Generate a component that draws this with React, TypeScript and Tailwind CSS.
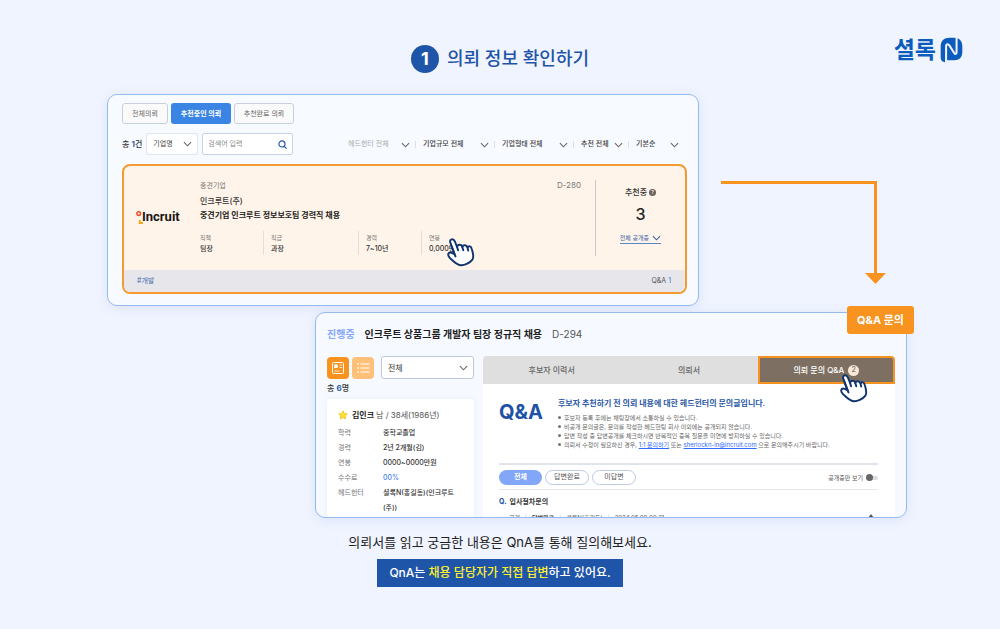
import type { ReactNode } from "react";

type SelectProps = {
  label: string;
  text: string;
  className?: string;
  selectClassName?: string;
};

const FILTERS = [
  { label: "헤드헌터", text: "헤드헌터 전체", width: "w-[62px]", muted: true },
  { label: "기업규모", text: "기업규모 전체", width: "w-[66px]", muted: false },
  { label: "기업형태", text: "기업형태 전체", width: "w-[66px]", muted: false },
  { label: "추천", text: "추천 전체", width: "w-[42px]", muted: false },
  { label: "정렬", text: "기본순", width: "w-[43px]", muted: false },
];

const SPECS = [
  { name: "직책", value: "팀장", width: "w-[63px]" },
  { name: "직급", value: "과장", width: "w-[95px]" },
  { name: "경력", value: "7~10년", width: "w-[63px]" },
  { name: "연봉", value: "0,000만원", width: "w-[60px]" },
];

const PROFILE = [
  { name: "학력", value: "중학교졸업" },
  { name: "경력", value: "2년 2개월(김)" },
  { name: "연봉", value: "0000~0000만원" },
  { name: "수수료", value: "00%", accent: true },
  { name: "헤드헌터", value: "셜록N(홍길동)(인크루트(주))" },
];

function Chevron({ className = "" }: { className?: string }) {
  return (
    <svg
      viewBox="0 0 10 6"
      className={`h-[6px] w-[9px] ${className}`}
      fill="none"
      stroke="currentColor"
      strokeWidth="1.2"
      aria-hidden="true"
    >
      <path d="M1 0.8 5 5 9 0.8" />
    </svg>
  );
}

function HandCursor({ className = "" }: { className?: string }) {
  return (
    <svg
      viewBox="0 0 86 88"
      className={`pointer-events-none absolute z-10 h-[29px] w-[28px] ${className}`}
      stroke="#12356f"
      strokeWidth="6"
      strokeLinecap="round"
      strokeLinejoin="round"
      aria-hidden="true"
    >
      <path
        fill="#fff"
        d="M10 13C7 2 20 0 24 10L31 27C33 18 45 18 47 27C50 19 61 20 63 29C67 22 74 24 76 33C80 46 84 56 78 66C70 77 52 84 42 83C28 82 20 71 8 60C0 50 4 41 14 45L23 49Z"
      />
      <path fill="none" d="M14 25 26 56M31 27 34 37M47 27 50 37M63 29 65 38" />
    </svg>
  );
}

function SelectBox({ label, text, className = "", selectClassName = "" }: SelectProps) {
  return (
    <div className={`relative flex items-center ${className}`}>
      <select
        aria-label={label}
        className={`h-full w-full appearance-none bg-transparent outline-none ${selectClassName}`}
      >
        <option>{text}</option>
      </select>
      <Chevron className="pointer-events-none absolute right-[5px] text-[#666]" />
    </div>
  );
}

function Logo() {
  return (
    <div className="flex items-center gap-1 text-[#0c5cbd]">
      <span className="text-[23px] font-bold leading-6">셜록</span>
      <svg viewBox="0 0 68 76" className="h-[26px] w-[23px]" role="img" aria-label="N">
        <path
          fill="currentColor"
          d="M28 2H42C57 2 66 12 66 27V43C66 60 57 68 42 68H28C22 68 18 67 15 65V74C7 74 2 69 2 61V27C2 12 12 2 28 2Z"
        />
        <path
          d="M18 76V27C18 20 24 19 28 25L42 47C45 51 49 50 49 45V0"
          fill="none"
          stroke="#f0f4ff"
          strokeWidth="6"
        />
      </svg>
    </div>
  );
}

function IncruitLogo() {
  return (
    <div className="flex items-center">
      <svg viewBox="0 0 7 15" className="-mr-px h-[15px] w-[7px]" fill="none" aria-hidden="true">
        <circle cx="2.7" cy="3.6" r="1.8" stroke="#e94e2b" strokeWidth="1.5" />
        <path d="M3.8 10V13H7" stroke="#f5a81c" strokeWidth="2" />
      </svg>
      <span className="text-[13px] font-bold leading-4 text-[#1b1512] [font-family:Roboto,sans-serif]">
        Incruit
      </span>
    </div>
  );
}

function FlowArrow() {
  return (
    <svg
      viewBox="0 0 166 105"
      className="ml-[21px] mt-[86px] h-[105px] w-[166px] shrink-0"
      aria-hidden="true"
    >
      <path d="M1 2.5H155.5V94" fill="none" stroke="#f7931e" strokeWidth="3" />
      <path d="M145 93H166L155.5 104Z" fill="#f7931e" />
    </svg>
  );
}

function RequestCard() {
  return (
    <article className="mt-[9px] overflow-hidden rounded-lg border-2 border-[#f59a30] bg-[#fff4e9]">
      <div className="flex h-[104px]">
        <div className="flex w-[76px] shrink-0 items-center pb-[2px] pl-3">
          <IncruitLogo />
        </div>

        <div className="min-w-0 flex-1 pt-[14px]">
          <div className="flex justify-between pr-[14px] leading-[11px] text-[#777]">
            <span>중견기업</span>
            <span className="text-[8px]">D-280</span>
          </div>
          <p className="mt-1 text-[8px] font-medium leading-3 text-[#333]">인크루트(주)</p>
          <h2 className="mt-[2px] text-[8px] font-bold leading-3 text-[#222]">
            중견기업 인크루트 정보보호팀 경력직 채용
          </h2>
          <dl className="mt-[10px] flex">
            {SPECS.map((spec, index) => (
              <div
                key={spec.name}
                className={`relative ${spec.width} leading-[11px] ${
                  index > 0 ? "border-l border-[#e6ddd5] pl-[7px]" : ""
                }`}
              >
                <dt className="pt-px text-[6px] text-[#777]">{spec.name}</dt>
                <dd className="pb-px font-medium text-[#333]">{spec.value}</dd>
                {index === 3 && <HandCursor className="left-[25px] top-[7px]" />}
              </div>
            ))}
          </dl>
        </div>

        <div className="my-[14px] flex w-[90px] shrink-0 flex-col items-center border-l border-[#c9c9ca] pt-[6px]">
          <p className="flex items-center gap-[2px] text-[8px] font-medium leading-3 text-[#333]">
            추천중
            <span className="flex h-[7px] w-[7px] items-center justify-center rounded-full bg-[#6e635a] text-[5px] leading-none text-white">
              ?
            </span>
          </p>
          <strong className="mt-[6px] text-[16px] font-medium leading-5 text-[#222]">3</strong>
          <button
            type="button"
            className="mt-[9px] flex items-center gap-[3px] border-b border-[#5c86c5] text-[6px] leading-[10px] text-[#3c63a8]"
          >
            전체 공개중
            <Chevron className="h-[4px] w-[6px]" />
          </button>
        </div>
      </div>

      <div className="flex h-[22px] items-center justify-between bg-[#e6e6eb] pl-[13px] pr-[14px] pt-px">
        <span className="text-[#4a6fae]">#개발</span>
        <span className="text-[#555]">
          Q&amp;A <span className="text-[#3c74d6]">1</span>
        </span>
      </div>
    </article>
  );
}

function RequestList() {
  return (
    <section className="w-[74%] shrink-0 rounded-[10px] border border-[#94bbef] bg-[#f7faff] pb-[11px] pl-[14px] pr-[11px] pt-2 text-[7px] shadow-[0_2px_12px_rgba(70,110,200,0.12)]">
      <div className="flex gap-[3px]">
        <button
          type="button"
          className="h-[21px] w-[46px] rounded-[3px] border border-[#c8cfdc] bg-[#fafafa] pt-px text-[#666]"
        >
          전체의뢰
        </button>
        <button
          type="button"
          className="h-[21px] w-[60px] rounded-[3px] bg-[#3a84e4] pt-px font-bold text-white"
        >
          추천중인 의뢰
        </button>
        <button
          type="button"
          className="h-[21px] w-[60px] rounded-[3px] border border-[#c8cfdc] bg-[#fafafa] pt-px text-[#666]"
        >
          추천완료 의뢰
        </button>
      </div>

      <div className="mt-[9px] flex h-[22px] items-center">
        <p className="mr-1 whitespace-nowrap text-[8px] font-medium text-[#333]">
          총 <span className="font-bold text-[#2b5cad]">1</span>건
        </p>
        <SelectBox
          label="검색 조건"
          text="기업명"
          className="h-full w-[52px] rounded-[2px] border border-[#e1e6ef] bg-white"
          selectClassName="pl-[6px] text-[#444]"
        />
        <div className="ml-1 flex h-full w-[91px] items-center rounded-[2px] border border-[#c9d3e6] bg-white px-[5px]">
          <input
            aria-label="검색어"
            placeholder="검색어 입력"
            className="min-w-0 flex-1 outline-none placeholder:text-[#888]"
          />
          <svg
            viewBox="0 0 10 10"
            className="h-[9px] w-[9px]"
            fill="none"
            stroke="#2457a8"
            strokeWidth="1.3"
            aria-hidden="true"
          >
            <circle cx="4.4" cy="4.4" r="3.4" />
            <path d="M7 7 9.6 9.6" />
          </svg>
        </div>

        <div className="ml-auto flex items-center pr-2 pt-px">
          {FILTERS.map((filter, index) => (
            <div key={filter.label} className="flex items-center">
              {index > 0 && <span className="ml-[5px] mr-[7px] h-[7px] w-px bg-[#dde2ea]" />}
              <div className={`relative flex items-center ${filter.width}`}>
                <select
                  aria-label={filter.label}
                  className={`w-full appearance-none bg-transparent outline-none ${
                    filter.muted ? "text-[#aaa]" : "font-medium text-[#444]"
                  }`}
                >
                  <option>{filter.text}</option>
                </select>
                <Chevron className="pointer-events-none absolute right-0 text-[#666]" />
              </div>
            </div>
          ))}
        </div>
      </div>

      <RequestCard />
    </section>
  );
}

function CandidateColumn() {
  return (
    <div className="flex w-[147px] shrink-0 flex-col">
      <div className="flex items-center gap-[3px]">
        <button
          type="button"
          aria-label="카드형 보기"
          className="flex h-[22px] w-[22px] items-center justify-center rounded-[4px] bg-[#f7931e]"
        >
          <svg viewBox="0 0 12 12" className="h-3 w-3" fill="none" stroke="#fff" aria-hidden="true">
            <rect x="0.5" y="0.5" width="11" height="11" rx="1" />
            <rect x="2.5" y="2.8" width="3" height="3" fill="#fff" strokeWidth="0.5" />
            <path d="M7.5 3H10M7.5 5.5H10M2.2 9H7.5" strokeWidth="0.8" />
          </svg>
        </button>
        <button
          type="button"
          aria-label="목록형 보기"
          className="flex h-[22px] w-[22px] items-center justify-center rounded-[4px] bg-[#ffc078]"
        >
          <svg viewBox="0 0 13 10" className="h-[10px] w-[13px]" stroke="#fff" aria-hidden="true">
            <path d="M0 1H2M3.5 1H13M0 5H2M3.5 5H13M0 9H2M3.5 9H13" />
          </svg>
        </button>
        <SelectBox
          label="후보자 구분"
          text="전체"
          className="ml-1 h-[23px] flex-1 rounded-[3px] border border-[#bcc9dc] bg-white"
          selectClassName="pl-[6px] text-[8px] text-[#333]"
        />
      </div>

      <p className="mt-[3px] text-[8px] font-medium leading-3 text-[#333]">
        총 <span className="font-bold text-[#2b5cad]">6</span>명
      </p>

      <div className="mt-[5px] flex-1 rounded-[4px] bg-white px-[11px] pt-[10px] shadow-[0_0_5px_rgba(80,110,170,0.08)]">
        <p className="flex items-center text-[8px] leading-3 text-[#555]">
          <svg viewBox="0 0 10 10" className="mr-1 h-[10px] w-[10px]" aria-hidden="true">
            <path
              fill="#ffe22e"
              stroke="#e8b91b"
              strokeWidth="0.7"
              strokeLinejoin="round"
              d="M5 0.8 6.3 3.5 9.3 3.9 7.1 6 7.7 9 5 7.6 2.3 9 2.9 6 0.7 3.9 3.7 3.5Z"
            />
          </svg>
          <strong className="mr-[2px] text-[#222]">김인크</strong> 남 / 38세(1986년)
        </p>
        <dl className="mt-1 leading-[15px]">
          {PROFILE.map((row) => (
            <div key={row.name} className="flex">
              <dt className="w-[45px] shrink-0 text-[#777]">{row.name}</dt>
              <dd className={`break-keep font-medium ${row.accent ? "text-[#4a7fe8]" : "text-[#333]"}`}>
                {row.accent ? row.value : row.value.replace("(주)", "\u200b(주)")}
              </dd>
            </div>
          ))}
        </dl>
      </div>
    </div>
  );
}

function Notice({ children }: { children: ReactNode }) {
  return (
    <li className="flex items-center gap-[3px] whitespace-nowrap">
      <span className="h-[3px] w-[3px] shrink-0 rounded-full bg-[#777]" />
      <span>{children}</span>
    </li>
  );
}

function QnaColumn() {
  return (
    <div className="ml-[9px] min-w-0 flex-1 rounded-t-[4px] bg-white">
      <div className="grid h-[28px] grid-cols-3 text-[8px] font-medium text-[#666]">
        <button type="button" className="rounded-tl-[4px] bg-[#dfdfdf]">
          후보자 이력서
        </button>
        <button type="button" className="bg-[#dfdfdf]">
          의뢰서
        </button>
        <button
          type="button"
          className="relative flex items-center justify-center gap-1 rounded-tr-[4px] border-2 border-[#f7931e] bg-[#7d7062] text-white"
        >
          의뢰 문의 Q&amp;A
          <span className="flex h-[11px] w-[11px] items-center justify-center rounded-full bg-[#f8e8d8] text-[7px] text-[#7d7062]">
            2
          </span>
          <HandCursor className="left-[80px] top-[16px]" />
        </button>
      </div>

      <div className="pl-4 pr-[17px]">
        <div className="flex pt-[13px]">
          <h3 className="w-[59px] shrink-0 pt-[3px] text-[20px] font-bold leading-6 text-[#1d52a5]">
            Q&amp;A
          </h3>
          <div>
            <p className="whitespace-nowrap text-[8px] font-bold leading-3 text-[#2b5aa6]">
              후보자 추천하기 전 의뢰 내용에 대한 헤드헌터의 문의글입니다.
            </p>
            <ul className="mt-1 text-[6px] leading-[9px] text-[#666]">
              <Notice>후보자 등록 후에는 채팅장에서 소통하실 수 있습니다.</Notice>
              <Notice>비공개 문의글은, 문의를 작성한 헤드헌팅 회사 이외에는 공개되지 않습니다.</Notice>
              <Notice>답변 작성 중 답변공개를 체크하시면 반복적인 중복 질문을 미연에 방지하실 수 있습니다.</Notice>
              <Notice>
                의뢰서 수정이 필요하신 경우,{" "}
                <a href="#inquiry" className="text-[#2f6bff] underline">
                  1:1 문의하기
                </a>{" "}
                또는{" "}
                <a href="mailto:sherlockn-in@incruit.com" className="text-[#2f6bff] underline">
                  sherlockn-in@incruit.com
                </a>{" "}
                으로 문의해주시기 바랍니다.
              </Notice>
            </ul>
          </div>
        </div>

        <div className="mt-[14px] flex items-center justify-between border-b border-t-2 border-b-[#e6e8ec] border-t-[#dfe3ea] pb-1 pt-[5px]">
          <div className="flex gap-[3px]">
            <button
              type="button"
              className="h-[15px] w-[43px] rounded-full bg-[#82a6f8] font-bold text-white"
            >
              전체
            </button>
            <button
              type="button"
              className="h-[15px] w-[44px] rounded-full border border-[#bccbe2] text-[#555]"
            >
              답변완료
            </button>
            <button
              type="button"
              className="h-[15px] w-[44px] rounded-full border border-[#bccbe2] text-[#555]"
            >
              미답변
            </button>
          </div>
          <label className="flex items-center gap-[3px] text-[6px] text-[#555]">
            공개중만 보기
            <input type="checkbox" className="peer sr-only" />
            <span className="flex h-[7px] w-3 items-center">
              <span className="z-10 h-[7px] w-[7px] rounded-full bg-[#666]" />
              <span className="-ml-[2px] h-1 w-[7px] rounded-r-full bg-[#ddd]" />
            </span>
          </label>
        </div>

        <p className="mt-[6px] font-bold leading-3 text-[#333]">
          <span className="mr-[3px] text-[#1d52a5]">Q.</span>입사절차문의
        </p>
        <div className="mt-[5px] flex items-start justify-between pl-[10px] pr-1 leading-[10px] text-[#666]">
          <p className="flex gap-[5px] whitespace-nowrap text-[6px]">
            <span>공개</span>
            <span className="text-[#ccc]">|</span>
            <strong className="text-[#444]">답변완료</strong>
            <span className="text-[#ccc]">|</span>
            <span>셜록N(홍길동)</span>
            <span className="text-[#ccc]">|</span>
            <span>2024.05.09 09:21</span>
          </p>
          <svg viewBox="0 0 6 4" className="mt-px h-1 w-[6px]" fill="#555" aria-hidden="true">
            <path d="M0 4 3 0 6 4Z" />
          </svg>
        </div>
      </div>
    </div>
  );
}

function RequestDetail() {
  return (
    <section className="relative ml-auto mt-[6px] w-[74%]">
      <div className="max-h-[206px] overflow-hidden rounded-[10px] border border-[#94bbef] bg-[#f6f9ff] pl-[11px] pr-[11px] text-[7px] shadow-[0_2px_12px_rgba(70,110,200,0.12)]">
        <div className="flex items-center pt-[13px] text-[10px] leading-4">
          <span className="mr-[10px] font-bold text-[#86a8f8]">진행중</span>
          <h2 className="mr-[10px] font-bold text-[#1c1c1c]">
            인크루트 상품그룹 개발자 팀장 정규직 채용
          </h2>
          <span className="text-[#555]">D-294</span>
        </div>
        <div className="mt-[14px] flex">
          <CandidateColumn />
          <QnaColumn />
        </div>
      </div>
      <span className="absolute -right-[7px] -top-[6px] rounded-[3px] bg-[#f7931e] px-[10px] py-[6px] text-[11px] font-bold leading-4 text-white">
        Q&amp;A 문의
      </span>
    </section>
  );
}

export default function App() {
  return (
    <main
      lang="ko"
      className="min-h-screen bg-[#f0f4ff] [font-family:Inter,'Noto_Sans_CJK_KR',sans-serif]"
    >
      <header className="grid grid-cols-[1fr_auto_1fr] items-start px-[37px] pt-9">
        <span />
        <h1 className="flex items-center gap-2 pt-[9px] text-[18px] font-medium leading-7 text-[#1f55a8]">
          <span className="flex h-7 w-7 items-center justify-center rounded-full bg-[#1f55a8] font-bold text-white">
            1
          </span>
          의뢰 정보 확인하기
        </h1>
        <div className="flex justify-end pt-px">
          <Logo />
        </div>
      </header>

      <div className="mt-[21px] pl-[107px] pr-[93px]">
        <div className="flex items-start">
          <RequestList />
          <FlowArrow />
        </div>
        <RequestDetail />
      </div>

      <footer className="mt-[14px] flex flex-col items-center pb-[40px]">
        <p className="text-[13px] leading-5 text-[#222]">
          의뢰서를 읽고 궁금한 내용은 QnA를 통해 질의해보세요.
        </p>
        <p className="mt-[7px] bg-[#1f55a8] px-3 py-1 text-[12px] font-medium leading-5 text-white">
          QnA는 <span className="text-[#fff02e]">채용 담당자가 직접 답변</span>하고 있어요.
        </p>
      </footer>
    </main>
  );
}
